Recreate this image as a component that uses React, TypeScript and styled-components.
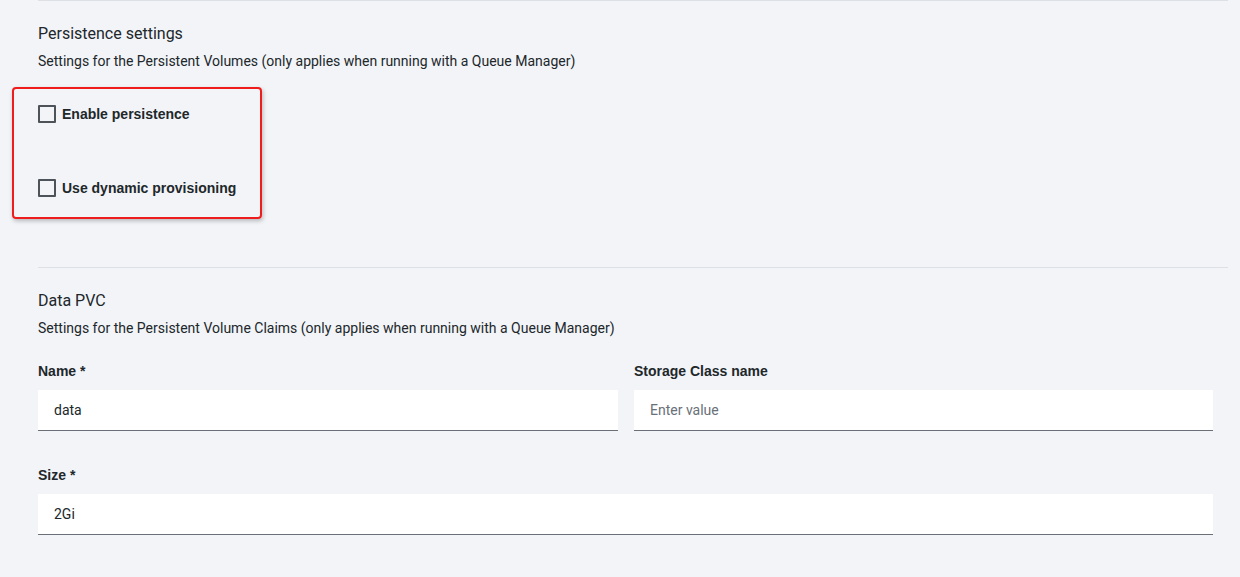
import React from "react";
import styled, { createGlobalStyle } from "styled-components";

const Global = createGlobalStyle`
  html, body { margin: 0; padding: 0; background: #f2f4f8; }
  body { font-family: Roboto, "Noto Sans", sans-serif; color: #21272a; }
`;

const Page = styled.div`
  width: 1190px;
  padding-left: 38px;
  height: 577px;
  overflow: hidden;
`;

const Section = styled.section<{ $pt: number }>`
  border-top: 1px solid #dde1e6;
  padding-top: ${(p) => p.$pt}px;
`;

const Title = styled.h3`
  margin: 0;
  font-size: 16px;
  line-height: 20px;
  font-weight: 400;
  color: #21272a;
`;

const Desc = styled.p`
  margin: 7px 0 0;
  font-size: 14px;
  line-height: 20px;
  font-weight: 400;
  color: #21272a;
`;

const CheckArea = styled.div`
  position: relative;
  margin-top: 31px;
  height: 165px;
`;

const Highlight = styled.div`
  position: absolute;
  left: -26px;
  top: -15px;
  width: 246px;
  height: 128px;
  border: 2px solid #ee1c1c;
  border-radius: 4px;
  box-shadow: 1px 2px 4px rgba(0, 0, 0, 0.25);
  pointer-events: none;
`;

const CheckList = styled.div`
  display: flex;
  flex-direction: column;
  gap: 50px;
`;

const CheckRow = styled.label`
  display: flex;
  align-items: center;
  gap: 6px;
  height: 24px;
  font-family: "Liberation Sans", Arial, sans-serif;
  font-weight: 700;
  font-size: 14px;
  color: #21272a;
`;

const Box = styled.span`
  width: 14px;
  height: 14px;
  border: 2px solid #4d5358;
  border-radius: 1px;
  background: transparent;
  flex: none;
`;

const FieldGrid = styled.div`
  margin-top: 24px;
  width: 1175px;
  display: grid;
  grid-template-columns: 580px 579px;
  column-gap: 16px;
  row-gap: 35px;
`;

const Field = styled.div<{ $span?: boolean }>`
  display: flex;
  flex-direction: column;
  grid-column: ${(p) => (p.$span ? "1 / -1" : "auto")};
`;

const Label = styled.label`
  font-family: "Liberation Sans", Arial, sans-serif;
  font-weight: 700;
  font-size: 14px;
  line-height: 18px;
  color: #21272a;
  margin-bottom: 10px;
`;

const Input = styled.input`
  box-sizing: border-box;
  height: 41px;
  width: 100%;
  border: none;
  border-bottom: 1px solid #697077;
  background: #ffffff;
  padding: 0 16px;
  font-family: Roboto, "Noto Sans", sans-serif;
  font-size: 14px;
  color: #21272a;
  outline: none;
  &::placeholder { color: #697077; }
`;

export default function App() {
  return (
    <>
      <Global />
      <Page>
        <Section $pt={23}>
          <Title>Persistence settings</Title>
          <Desc>Settings for the Persistent Volumes (only applies when running with a Queue Manager)</Desc>
          <CheckArea>
            <CheckList>
              <CheckRow><Box />Enable persistence</CheckRow>
              <CheckRow><Box />Use dynamic provisioning</CheckRow>
            </CheckList>
            <Highlight />
          </CheckArea>
        </Section>
        <Section $pt={23}>
          <Title>Data PVC</Title>
          <Desc>Settings for the Persistent Volume Claims (only applies when running with a Queue Manager)</Desc>
          <FieldGrid>
            <Field>
              <Label>Name *</Label>
              <Input defaultValue="data" />
            </Field>
            <Field>
              <Label>Storage Class name</Label>
              <Input placeholder="Enter value" />
            </Field>
            <Field $span>
              <Label>Size *</Label>
              <Input defaultValue="2Gi" />
            </Field>
          </FieldGrid>
        </Section>
      </Page>
    </>
  );
}
